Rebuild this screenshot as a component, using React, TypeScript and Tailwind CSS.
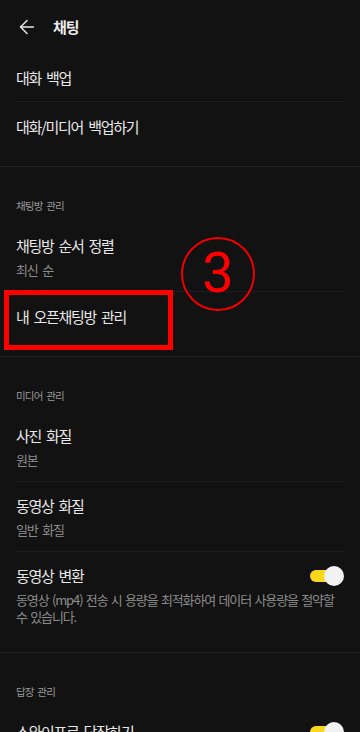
import { ArrowLeft } from "lucide-react";

const font = { fontFamily: '"Noto Sans CJK KR", "Noto Sans", sans-serif' };

function Toggle() {
    return (
        <div className="relative w-[34px] h-[20px] shrink-0">
            <div className="absolute left-0 right-[2px] top-[4px] h-[12px] rounded-full bg-[#f7d81a]" />
            <div className="absolute right-0 top-0 w-[20px] h-[20px] rounded-full bg-[#f2f2f2]" />
        </div>
    );
}

function Label({ text }: { text: string }) {
    return (
        <div className="px-4 pt-[31px] pb-[8px] text-[10.5px] leading-[16px] tracking-[-0.8px] [word-spacing:2px] text-[#9a9a9a]">
            {text}
        </div>
    );
}

function Title({ text }: { text: string }) {
    return (
        <div className="text-[15px] leading-[22px] tracking-[-1.3px] [word-spacing:3px] text-[#e8e8e8]">{text}</div>
    );
}

function Sub({ text }: { text: string }) {
    return (
        <div className="mt-1 text-[13px] leading-[18px] tracking-[-1.2px] [word-spacing:3px] text-[#8c8c8c]">
            {text}
        </div>
    );
}

function Thin() {
    return <div className="mx-4 h-px bg-[#1c1c1c]" />;
}

function Thick() {
    return <div className="h-px bg-[#232323]" />;
}

export default function App() {
    return (
        <div className="w-[360px] h-[732px] overflow-hidden bg-[#121212]" style={font}>
            <div className="h-[54px] flex items-center">
                <ArrowLeft className="ml-[16px] text-[#e8e8e8]" size={22} strokeWidth={1.6} />
                <span className="ml-[15px] text-[15px] font-bold tracking-[-1px] text-[#ececec]">채팅</span>
            </div>

            <div className="px-4 pt-[13px] pb-[12px]">
                <Title text="대화 백업" />
            </div>
            <Thin />
            <div className="px-4 pt-[14px] pb-[28px]">
                <Title text="대화/미디어 백업하기" />
            </div>
            <Thick />

            <div className="relative">
                <Label text="채팅방 관리" />
                <div className="px-4 pt-[13px] pb-[12px]">
                    <Title text="채팅방 순서 정렬" />
                    <Sub text="최신 순" />
                </div>
                <Thin />
                <div className="px-4 pt-[14px] pb-[28px]">
                    <Title text="내 오픈채팅방 관리" />
                </div>

                <div className="absolute left-[4px] top-[123px] w-[169px] h-[60px] border-[5px] border-[#ff0000]" />
                <div className="absolute left-[181px] top-[70px] w-[74px] h-[74px] rounded-full border-2 border-[#f00000] flex items-center justify-center">
                    <span
                        className="text-[56px] leading-none text-[#ff0000] -mt-[2px]"
                        style={{ fontFamily: "Roboto, sans-serif" }}
                    >
                        3
                    </span>
                </div>
            </div>
            <Thick />

            <Label text="미디어 관리" />
            <div className="px-4 pt-[13px] pb-[12px]">
                <Title text="사진 화질" />
                <Sub text="원본" />
            </div>
            <Thin />
            <div className="px-4 pt-[13px] pb-[12px]">
                <Title text="동영상 화질" />
                <Sub text="일반 화질" />
            </div>
            <Thin />
            <div className="px-4 pt-[13px] pb-[27px]">
                <div className="flex items-center justify-between">
                    <Title text="동영상 변환" />
                    <Toggle />
                </div>
                <div className="mt-[4px] text-[13px] leading-[17px] tracking-[-1.1px] [word-spacing:1.5px] text-[#8c8c8c] whitespace-nowrap">
                    <div>동영상 (mp4) 전송 시 용량을 최적화하여 데이터 사용량을 절약할</div>
                    <div>수 있습니다.</div>
                </div>
            </div>
            <Thick />

            <Label text="답장 관리" />
            <div className="px-4 pt-[13px]">
                <div className="flex items-center justify-between">
                    <Title text="스와이프로 답장하기" />
                    <Toggle />
                </div>
            </div>
        </div>
    );
}
